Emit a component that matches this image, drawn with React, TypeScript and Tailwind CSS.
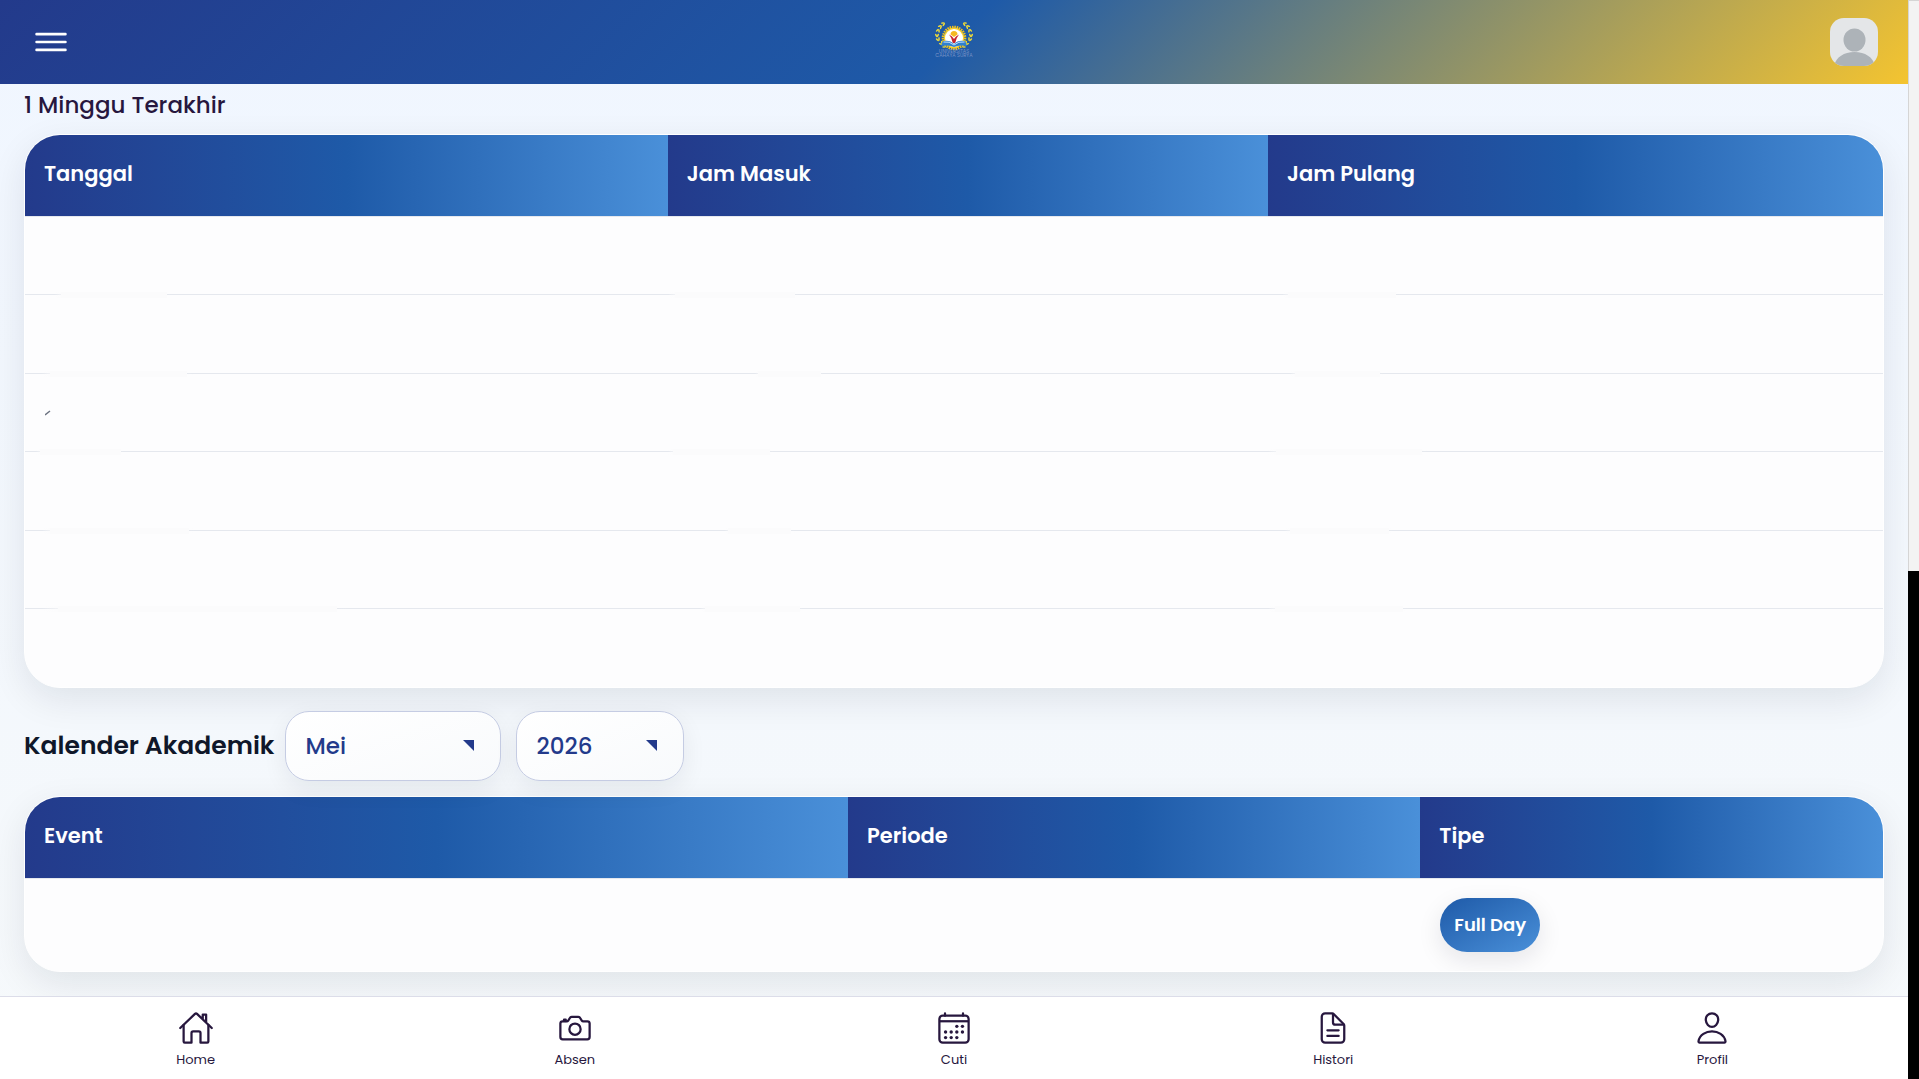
import { useState } from 'react';
import { clsx } from 'clsx';
import {
  IoCalendarOutline,
  IoCameraOutline,
  IoDocumentTextOutline,
  IoHomeOutline,
  IoMenuOutline,
  IoPersonOutline
} from 'react-icons/io5';

const months = [
  'Januari', 'Februari', 'Maret', 'April', 'Mei', 'Juni',
  'Juli', 'Agustus', 'September', 'Oktober', 'November', 'Desember'
];

const years = ['2024', '2025', '2026', '2027'];

const navItems = [
  { label: 'Home', icon: IoHomeOutline },
  { label: 'Absen', icon: IoCameraOutline },
  { label: 'Cuti', icon: IoCalendarOutline },
  { label: 'Histori', icon: IoDocumentTextOutline },
  { label: 'Profil', icon: IoPersonOutline }
];

// start and width of the faded part of the divider under each cell
const attendance = [
  { id: 1, fades: [[30, 118], [0, 134], [14, 120]] },
  { id: 2, fades: [[17, 153], [87, 70], [22, 95]] },
  { id: 3, fades: [[11, 89], [0, 107], [0, 162]] },
  { id: 4, fades: [[17, 155], [57, 70], [17, 110]] },
  { id: 5, fades: [[17, 310], [32, 105], [0, 142]] },
  { id: 6, fades: [] }
];

const leaves = [
  [9, 2, -30],
  [6, 5, -45],
  [4, 9, -70],
  [3, 13, 90],
  [4, 17, 65],
  [7, 21, 45],
  [10, 24, 25]
];

function Wreath() {
  return (
    <g fill="#ecd93a">
      {leaves.map(([x, y, angle]) => (
        <g key={y} transform={`rotate(${angle} ${x} ${y})`}>
          <ellipse cx={x} cy={y - 1} rx="1.9" ry="0.8" transform={`rotate(25 ${x} ${y})`} />
          <ellipse cx={x} cy={y + 1} rx="1.9" ry="0.8" transform={`rotate(-25 ${x} ${y})`} />
        </g>
      ))}
    </g>
  );
}

function Logo() {
  return (
    <svg viewBox="0 0 40 40" className="size-10" role="img" aria-label="Universitas Cahaya Surya">
      <Wreath />
      <g transform="translate(40 0) scale(-1 1)">
        <Wreath />
      </g>
      <circle cx="20" cy="16" r="11.2" fill="none" stroke="#f5c51c" strokeWidth="2.2" strokeDasharray="1.5 0.9" />
      <circle cx="20" cy="16" r="10.4" fill="#f8cf2a" />
      <circle cx="20" cy="16" r="9" fill="#fff" />
      <path d="M16.500 12.500a3.500 3.500 0 0 1 7 0L20 15z" fill="#f5b921" />
      <path d="M15 12.500q3.500 1.500 5 4.500 1.500-3 5-4.500-3 3.500-3.800 8.500h-2.400q-.8-5-3.800-8.500z" fill="#c8232c" />
      <path d="M9 19q7-1.500 11 3 4-4.500 11-3l2 5q-8-1.500-13 1-5-2.500-13-1z" fill="#2f80d0" />
      <path d="M9.500 20q6-1 10.500 3 4.500-4 10.500-3" fill="none" stroke="#c4e0f8" strokeWidth="1" />
      <text x="20" y="31" textAnchor="middle" fontSize="5" fill="#7a93c6">UNIVERSITAS</text>
      <text x="20" y="35" textAnchor="middle" fontSize="5" fill="#7a93c6">CAHAYA SURYA</text>
    </svg>
  );
}

function Avatar() {
  return (
    <svg viewBox="0 0 48 48" className="size-12" aria-hidden="true">
      <rect width="48" height="48" fill="#e4e6e8" />
      <ellipse cx="24.500" cy="22" rx="11" ry="11.500" fill="#adb3b8" />
      <path d="M4 48c2-9 10-14 20.500-14S43 39 45 48z" fill="#adb3b8" />
    </svg>
  );
}

interface HeadCellProps {
  children: string;
  className: string;
}

function HeadCell({ children, className }: HeadCellProps) {
  return (
    <th
      scope="col"
      className={clsx(
        'h-[81px] bg-linear-to-r from-[#233a8b] via-[#1e5aa8] to-[#4a90d9] px-[19px] pb-[3px] text-left text-[21px] font-semibold text-white',
        className
      )}
    >
      {children}
    </th>
  );
}

interface PickerProps {
  label: string;
  options: string[];
  value: string;
  onChange: (value: string) => void;
  className: string;
}

function Picker({ label, options, value, onChange, className }: PickerProps) {
  return (
    <div className={clsx('relative', className)}>
      <select
        aria-label={label}
        value={value}
        onChange={(e) => onChange(e.target.value)}
        className="block h-[70px] w-full appearance-none rounded-3xl border border-[#c5cce3] bg-linear-to-br from-white to-[#f8fafc] px-[19px] text-[23px] font-medium text-[#233a8b] shadow-[0_8px_24px_rgba(15,23,42,0.07)]"
      >
        {options.map((option) => (
          <option key={option}>{option}</option>
        ))}
      </select>
      <svg viewBox="0 0 11 11" className="pointer-events-none absolute top-[29px] right-[27px] size-[11px]">
        <path d="M0 0h11v11z" fill="#233a8b" />
      </svg>
    </div>
  );
}

const cardClass =
  'overflow-hidden rounded-[36px] border border-white bg-[#fdfdfe] shadow-[0_12px_36px_rgba(15,23,42,0.09)]';

export default function App() {
  const [month, setMonth] = useState('Mei');
  const [year, setYear] = useState('2026');

  return (
    <div className="flex min-h-screen bg-black font-[Poppins,Inter,'Open_Sans',sans-serif]">
      <div className="flex min-w-0 flex-1 flex-col bg-linear-to-b from-[#f0f6ff] to-[#f6f9fb]">
        <header className="grid h-21 grid-cols-3 items-center bg-[linear-gradient(135deg,#233a8b_0%,#1e5aa8_50%,#f4c430_100%)] px-[30px]">
          <button type="button" aria-label="Menu" className="justify-self-start text-white">
            <IoMenuOutline className="size-[42px]" />
          </button>
          <div className="justify-self-center">
            <Logo />
          </div>
          <button type="button" aria-label="Akun" className="overflow-hidden rounded-[14px] justify-self-end">
            <Avatar />
          </button>
        </header>

        <main className="flex-1 px-6 pb-6">
          <h2 className="pt-1 pb-[11px] text-[23px] leading-[35px] font-medium text-[#27173e]">1 Minggu Terakhir</h2>
          <div className={cardClass}>
            <table className="w-full table-fixed border-separate border-spacing-0">
              <thead>
                <tr>
                  <HeadCell className="w-[34.6%]">Tanggal</HeadCell>
                  <HeadCell className="w-[32.3%]">Jam Masuk</HeadCell>
                  <HeadCell className="w-[33.1%]">Jam Pulang</HeadCell>
                </tr>
              </thead>
              <tbody>
                {attendance.map(({ id, fades }) => (
                  <tr key={id} className="h-[78px] even:h-[79px]">
                    {[0, 1, 2].map((col) => (
                      <td key={col} className="relative border-t border-[#e5e8ee] px-5">
                        {id === 3 && col === 0 && (
                          <svg viewBox="0 0 6 6" className="size-1.5">
                            <path d="M0 5l5-4" stroke="#6b7280" strokeWidth="1.5" />
                          </svg>
                        )}
                        {fades[col] && (
                          <span
                            className="absolute -bottom-1 z-10 h-1.5 bg-linear-to-r from-transparent via-[#fbfbfc] to-transparent via-10% before:absolute before:inset-y-0 before:right-[5%] before:left-[5%] before:bg-[#fbfbfc]"
                            style={{ left: fades[col][0], width: fades[col][1] }}
                          />
                        )}
                      </td>
                    ))}
                  </tr>
                ))}
              </tbody>
            </table>
          </div>

          <div className="flex items-center gap-[11px] pt-[23px] pb-[15px]">
            <h2 className="text-[25px] font-semibold text-[#0f172a]">Kalender Akademik</h2>
            <div className="flex gap-[15px]">
              <Picker label="Bulan" options={months} value={month} onChange={setMonth} className="w-[216px]" />
              <Picker label="Tahun" options={years} value={year} onChange={setYear} className="w-[168px]" />
            </div>
          </div>

          <div className={cardClass}>
            <table className="w-full table-fixed border-separate border-spacing-0">
              <thead>
                <tr>
                  <HeadCell className="w-[44.3%]">Event</HeadCell>
                  <HeadCell className="w-[30.8%]">Periode</HeadCell>
                  <HeadCell className="w-[24.9%]">Tipe</HeadCell>
                </tr>
              </thead>
              <tbody>
                <tr className="h-[93px]">
                  <td className="border-t border-[#e5e8ee]" />
                  <td className="border-t border-[#e5e8ee]" />
                  <td className="border-t border-[#e5e8ee] px-5">
                    <span className="flex h-[54px] w-fit items-center rounded-full bg-linear-to-br from-[#1e5aa8] to-[#4a90d9] px-[14px] text-lg font-semibold text-white shadow-[0_8px_24px_rgba(15,23,42,0.1)]">
                      Full Day
                    </span>
                  </td>
                </tr>
              </tbody>
            </table>
          </div>
        </main>

        <nav className="grid h-[83px] grid-cols-5 border-t border-[#dcdde9] bg-white px-1.5">
          {navItems.map(({ label, icon: Icon }) => (
            <a key={label} href="#" className="flex flex-col items-center pt-[13px] text-[#27173e]">
              <Icon className="size-9" />
              <span className="mt-1 text-[13px] leading-5">{label}</span>
            </a>
          ))}
        </nav>
      </div>
      <div className="w-[11px]">
        <div className="h-[571px] border-t border-l border-[#d5d5d5] bg-[#f3f3f3]" />
      </div>
    </div>
  );
}
